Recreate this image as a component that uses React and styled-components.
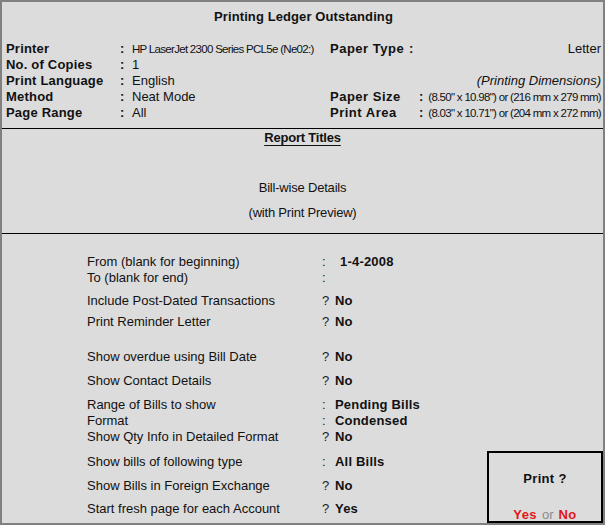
import styled, { createGlobalStyle } from 'styled-components'

const GlobalStyle = createGlobalStyle`
    html, body {
        margin: 0;
        padding: 0;
        background: #dcdcdc;
    }
    body {
        font-family: "Liberation Sans", Arial, sans-serif;
        color: #111;
    }
`

const Frame = styled.div`
    position: relative;
    box-sizing: border-box;
    width: 605px;
    height: 525px;
    border: 2px solid #808080;
    background: #dcdcdc;
    display: flex;
    flex-direction: column;
    font-size: 13px;
`

const Header = styled.section`
    height: 127px;
    padding: 7px 2px 0 4px;
    box-sizing: border-box;
    border-bottom: 1px solid #000;
`

const Title = styled.h1`
    margin: 0;
    height: 16px;
    line-height: 16px;
    text-align: center;
    font-size: 13px;
    font-weight: bold;
    letter-spacing: 0.1px;
`

const InfoGrid = styled.div`
    display: grid;
    grid-template-columns: 324px 1fr;
    margin-top: 16px;
`

const LeftInfo = styled.div`
    display: grid;
    grid-template-columns: 114px 12px 1fr;
    grid-auto-rows: 16px;
    line-height: 16px;
`

const Label = styled.span`
    font-weight: bold;
    letter-spacing: 0.2px;
`

const Colon = styled.span`
    font-weight: bold;
`

const Value = styled.span`
    white-space: nowrap;
    font-size: ${p => p.$narrow ? '11.5px' : '13px'};
    letter-spacing: ${p => p.$narrow ? '-0.7px' : '0'};
`

const RightInfo = styled.div`
    display: flex;
    flex-direction: column;
`

const RightRow = styled.div`
    display: flex;
    height: 16px;
    line-height: 16px;
    white-space: nowrap;
`

const RightLabel = styled(Label)`
    width: ${p => p.$width}px;
    margin-right: 4px;
    letter-spacing: 0.5px;
`

const RightValue = styled(Value)`
    flex: 1;
    text-align: right;
    font-style: ${p => p.$italic ? 'italic' : 'normal'};
`

const Titles = styled.section`
    height: 105px;
    box-sizing: border-box;
    border-bottom: 1px solid #000;
    display: flex;
    flex-direction: column;
    align-items: center;
    padding-top: 1px;
`

const SectionHeading = styled.h2`
    margin: 0;
    font-size: 13px;
    line-height: 16px;
    font-weight: bold;
    text-decoration: underline;
    text-underline-offset: 3px;
    letter-spacing: -0.2px;
`

const TitleLine = styled.div`
    line-height: 16px;
    margin-top: ${p => p.$space}px;
    letter-spacing: -0.2px;
`

const Options = styled.section`
    flex: 1;
    padding: 20px 0 0 85px;
`

const OptionRow = styled.div`
    display: grid;
    grid-template-columns: 235px 13px 1fr;
    height: 16px;
    line-height: 16px;
    margin-top: ${p => p.$space}px;
`

const Mark = styled.span`
    color: #222;
`

const OptionValue = styled.span`
    font-weight: bold;
    letter-spacing: 0.2px;
    padding-left: ${p => p.$indent || 0}px;
`

const PrintBox = styled.div`
    position: absolute;
    right: 0;
    bottom: 0;
    width: 116px;
    height: 72px;
    box-sizing: border-box;
    border: 2px solid #000;
    background: #dcdcdc;
    display: flex;
    flex-direction: column;
    align-items: center;
`

const Question = styled.div`
    margin-top: 18px;
    font-weight: bold;
    line-height: 16px;
    letter-spacing: 0.3px;
`

const Answers = styled.div`
    margin-top: 20px;
    line-height: 16px;
    display: flex;
    gap: 5px;
`

const Answer = styled.span`
    color: #e01818;
    font-weight: bold;
    letter-spacing: 0.4px;
`

const Or = styled.span`
    color: #8a8a8a;
`

const printerInfo = [
    { label: 'Printer', value: 'HP LaserJet 2300 Series PCL5e (Ne02:)', narrow: true },
    { label: 'No. of Copies', value: '1' },
    { label: 'Print Language', value: 'English' },
    { label: 'Method', value: 'Neat Mode' },
    { label: 'Page Range', value: 'All' },
]

const options = [
    { label: 'From (blank for beginning)', mark: ':', value: '1-4-2008', space: 0, indent: 5 },
    { label: 'To (blank for end)', mark: ':', value: '', space: 0 },
    { label: 'Include Post-Dated Transactions', mark: '?', value: 'No', space: 7 },
    { label: 'Print Reminder Letter', mark: '?', value: 'No', space: 5 },
    { label: 'Show overdue using Bill Date', mark: '?', value: 'No', space: 19 },
    { label: 'Show Contact Details', mark: '?', value: 'No', space: 8 },
    { label: 'Range of Bills to show', mark: ':', value: 'Pending Bills', space: 8 },
    { label: 'Format', mark: ':', value: 'Condensed', space: 0 },
    { label: 'Show Qty Info in Detailed Format', mark: '?', value: 'No', space: 0 },
    { label: 'Show bills of following type', mark: ':', value: 'All Bills', space: 9 },
    { label: 'Show Bills in Foreign Exchange', mark: '?', value: 'No', space: 8 },
    { label: 'Start fresh page for each Account', mark: '?', value: 'Yes', space: 7 },
]

export default function App() {
    return (
        <>
            <GlobalStyle />
            <Frame>
                <Header>
                    <Title>Printing Ledger Outstanding</Title>
                    <InfoGrid>
                        <LeftInfo>
                            {printerInfo.map(item => (
                                <>
                                    <Label key={item.label}>{item.label}</Label>
                                    <Colon>:</Colon>
                                    <Value $narrow={item.narrow}>{item.value}</Value>
                                </>
                            ))}
                        </LeftInfo>
                        <RightInfo>
                            <RightRow>
                                <RightLabel $width={75}>Paper Type</RightLabel>
                                <Colon>:</Colon>
                                <RightValue>Letter</RightValue>
                            </RightRow>
                            <RightRow />
                            <RightRow>
                                <RightValue $italic>(Printing Dimensions)</RightValue>
                            </RightRow>
                            <RightRow>
                                <RightLabel $width={85}>Paper Size</RightLabel>
                                <Colon>:</Colon>
                                <RightValue $narrow>(8.50" x 10.98") or (216 mm x 279 mm)</RightValue>
                            </RightRow>
                            <RightRow>
                                <RightLabel $width={85}>Print Area</RightLabel>
                                <Colon>:</Colon>
                                <RightValue $narrow>(8.03" x 10.71") or (204 mm x 272 mm)</RightValue>
                            </RightRow>
                        </RightInfo>
                    </InfoGrid>
                </Header>

                <Titles>
                    <SectionHeading>Report Titles</SectionHeading>
                    <TitleLine $space={34}>Bill-wise Details</TitleLine>
                    <TitleLine $space={9}>(with Print Preview)</TitleLine>
                </Titles>

                <Options>
                    {options.map(opt => (
                        <OptionRow key={opt.label} $space={opt.space}>
                            <span>{opt.label}</span>
                            <Mark>{opt.mark}</Mark>
                            <OptionValue $indent={opt.indent}>{opt.value}</OptionValue>
                        </OptionRow>
                    ))}
                </Options>

                <PrintBox>
                    <Question>Print ?</Question>
                    <Answers>
                        <Answer>Yes</Answer>
                        <Or>or</Or>
                        <Answer>No</Answer>
                    </Answers>
                </PrintBox>
            </Frame>
        </>
    )
}
